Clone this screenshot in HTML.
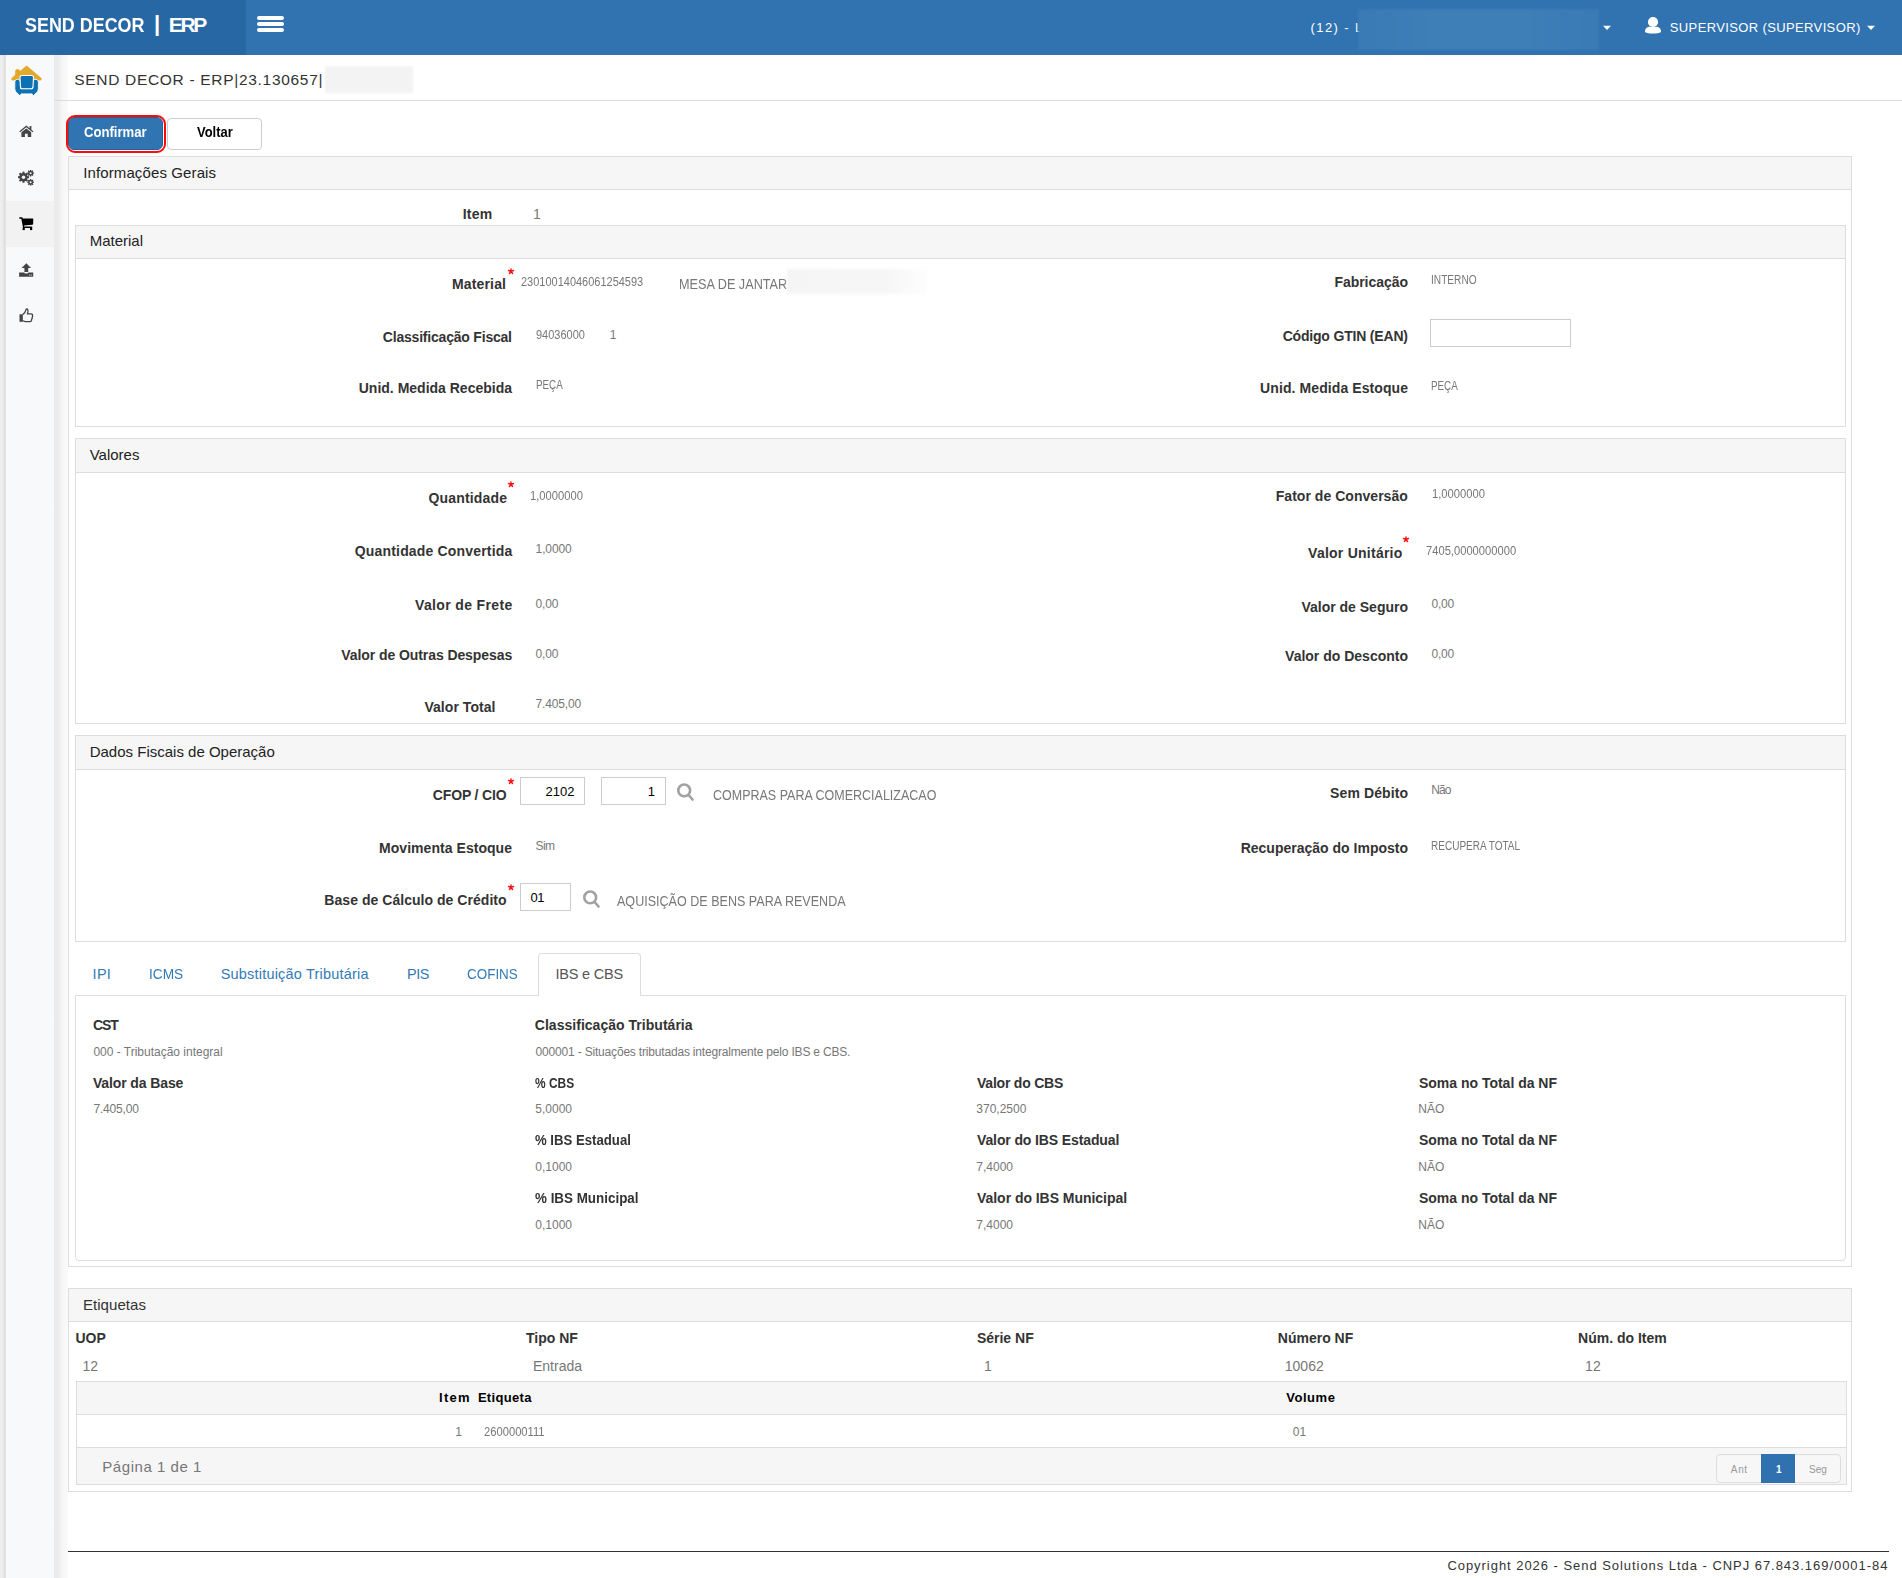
<!DOCTYPE html>
<html><head><meta charset="utf-8"><title>SEND DECOR | ERP</title>
<style>
html,body{margin:0;padding:0;}
body{width:1902px;height:1578px;position:relative;overflow:hidden;background:#fff;font-family:'Liberation Sans', sans-serif;}
.t{position:absolute;white-space:pre;}
.a{position:absolute;box-sizing:border-box;}
</style></head><body>
<!-- header -->
<div class=a style="left:0;top:0;width:1902px;height:55px;background:#3073b0;"></div>
<div class=a style="left:0;top:0;width:246px;height:55px;background:#2767a3;"></div>
<div class=a style="left:257px;top:15.6px;width:27px;height:4.2px;border-radius:2px;background:#fff;"></div>
<div class=a style="left:257px;top:22px;width:27px;height:4.2px;border-radius:2px;background:#fff;"></div>
<div class=a style="left:257px;top:28.2px;width:27px;height:4.2px;border-radius:2px;background:#fff;"></div>
<!-- blurred company -->
<div class=a style="left:1357.5px;top:9px;width:241.5px;height:41px;background:linear-gradient(to right,#3a7ab5 0%,#3e7fb8 30%,#3e7fb8 70%,#3a7ab5 100%);filter:blur(1px);z-index:2;"></div>
<svg class=a style="left:1603px;top:25px" width="9" height="6"><path d="M0 0.8 L8 0.8 L4 5 Z" fill="#fff"/></svg>
<!-- user icon -->
<svg class=a style="left:1644px;top:16px" width="18" height="19" viewBox="0 0 18 19"><circle cx="9" cy="6" r="5.1" fill="#fff"/><path d="M1 15.5 C1 12 4 10.8 5.5 10.8 L12.5 10.8 C14 10.8 17 12 17 15.5 C17 17 13 17.6 9 17.6 C5 17.6 1 17 1 15.5 Z" fill="#fff"/></svg>
<svg class=a style="left:1867px;top:25px" width="9" height="6"><path d="M0 0.8 L8 0.8 L4 5 Z" fill="#fff"/></svg>

<!-- sidebar -->
<div class=a style="left:0;top:55px;width:6px;height:1523px;background:linear-gradient(to right,#f0f0f0 0%,#ebebeb 45%,#dedede 80%,#e6e6e6 100%);"></div>
<div class=a style="left:6px;top:55px;width:48px;height:1523px;background:#f8f9fb;"></div>
<div class=a style="left:54px;top:55px;width:14px;height:1523px;background:linear-gradient(to right,#eaeaea 0%,#eeeeee 40%,#f6f6f6 55%,#fafafa 100%);"></div>
<div class=a style="left:6px;top:201px;width:48px;height:46px;background:#f2f2f2;"></div>
<!-- sidebar icons -->
<svg class=a style="left:0px;top:40px" width="54" height="60" viewBox="0 0 54 60">
  <path d="M26.6 25.6 L40.8 37.4 C42.3 38.6 41.9 40.6 40.2 40.6 L12.8 40.6 C11.1 40.6 10.7 38.6 12.2 37.4 L15.2 34.9 L15.2 31.2 C15.2 29.9 16.2 29.3 17.6 29.3 C19 29.3 20.2 29.9 20.2 30.9 Z" fill="#e3a92d"/>
  <path d="M17.4 39.4 C19 39.4 20.6 40.4 20.6 42.4 L20.6 48.6 L32.6 48.6 L32.6 42.4 C32.6 40.4 34.2 39.4 35.8 39.4 C37.4 39.4 38.4 40.4 38.4 42.4 L38.4 48.3 C38.4 50.8 37.3 52.4 35.5 53.5 L33.1 56.2 L32.1 53.9 L21.1 53.9 L20.1 56.2 L17.7 53.5 C15.9 52.4 14.8 50.8 14.8 48.3 L14.8 42.4 C14.8 40.4 15.8 39.4 17.4 39.4 Z" fill="#0c72b3" stroke="#fff" stroke-width="0.9"/>
  <path d="M22.2 35.5 L31.4 35.5 C32.8 35.5 33.5 36.2 33.5 37.4 L33 46.4 C33 47.8 32.2 48.7 30.8 48.7 L22.6 48.7 C21.2 48.7 20.4 47.8 20.4 46.4 L20 37.4 C20 36.2 20.8 35.5 22.2 35.5 Z" fill="#0c72b3" stroke="#fff" stroke-width="1.1"/>
</svg>
<!-- home -->
<svg class=a style="left:19px;top:125px" width="15" height="13" viewBox="0 0 15 13"><path d="M0.3 6.2 L7.3 0.6 L10.6 3.2 L10.6 1 L12.4 1 L12.4 4.7 L14.4 6.3 L13.6 7.2 L7.3 2.2 L1.1 7.2 Z" fill="#444"/><path d="M2.4 7.2 L7.3 3.4 L12.2 7.2 L12.2 12 L8.7 12 L8.7 8.8 L5.9 8.8 L5.9 12 L2.4 12 Z" fill="#444"/></svg>
<!-- gears -->
<svg class=a style="left:18px;top:170px" width="17" height="16" viewBox="0 0 17 16">
 <g fill="#444">
  <circle cx="5.5" cy="7.2" r="4.2"/>
  <g transform="translate(5.5 7.2)"><rect x="-1" y="-5.6" width="2" height="11.2"/><rect x="-5.6" y="-1" width="11.2" height="2"/><rect x="-1" y="-5.6" width="2" height="11.2" transform="rotate(45)"/><rect x="-1" y="-5.6" width="2" height="11.2" transform="rotate(-45)"/></g>
  <circle cx="12.6" cy="3.2" r="2.4"/>
  <g transform="translate(12.6 3.2)"><rect x="-0.7" y="-3.3" width="1.4" height="6.6"/><rect x="-3.3" y="-0.7" width="6.6" height="1.4"/><rect x="-0.7" y="-3.3" width="1.4" height="6.6" transform="rotate(45)"/><rect x="-0.7" y="-3.3" width="1.4" height="6.6" transform="rotate(-45)"/></g>
  <circle cx="12.6" cy="12.3" r="2.4"/>
  <g transform="translate(12.6 12.3)"><rect x="-0.7" y="-3.3" width="1.4" height="6.6"/><rect x="-3.3" y="-0.7" width="6.6" height="1.4"/><rect x="-0.7" y="-3.3" width="1.4" height="6.6" transform="rotate(45)"/><rect x="-0.7" y="-3.3" width="1.4" height="6.6" transform="rotate(-45)"/></g>
 </g>
 <circle cx="5.5" cy="7.2" r="1.7" fill="#f8f9fb"/><circle cx="12.6" cy="3.2" r="1" fill="#f8f9fb"/><circle cx="12.6" cy="12.3" r="1" fill="#f8f9fb"/>
</svg>
<!-- cart -->
<svg class=a style="left:19px;top:217px" width="15" height="14" viewBox="0 0 15 14"><path d="M0.3 0.3 L2.6 0.3 C3.2 0.3 3.6 0.8 3.7 1.3 L3.8 1.6 L14.2 1.6 L14.2 6.8 C14.2 7.3 13.8 7.7 13.3 7.8 L5 8.6 L5.2 9.6 L13.2 9.6 L13.2 11 L4.1 11 L2.3 1.8 L0.3 1.8 Z" fill="#000"/><rect x="3.6" y="10.5" width="2.2" height="2.6" fill="#000"/><rect x="11" y="10.5" width="2.2" height="2.6" fill="#000"/></svg>
<!-- upload -->
<svg class=a style="left:19px;top:263px" width="15" height="15" viewBox="0 0 15 15"><path d="M7.3 0.3 L12 5 L9.2 5 L9.2 9 L5.4 9 L5.4 5 L2.6 5 Z" fill="#444"/><path d="M0.1 9.5 L5.2 9.5 C5.5 10.3 6.3 10.6 7.3 10.6 C8.3 10.6 9.1 10.3 9.4 9.5 L14.2 9.5 L14.2 13.8 L0.1 13.8 Z" fill="#444"/><circle cx="10.6" cy="12" r="0.6" fill="#f8f9fb"/><circle cx="12.3" cy="12" r="0.6" fill="#f8f9fb"/></svg>
<!-- thumbs up -->
<svg class=a style="left:19px;top:308px" width="15" height="16" viewBox="0 0 15 16"><path d="M0.5 6.3 L3.8 6.3 L3.8 13.8 L0.5 13.8 Z" fill="#444"/><path d="M3.6 6.8 C5.6 5.2 6.6 3.5 7 1.6 C7.2 0.8 8.2 0.8 8.7 1.5 C9.2 2.4 9.1 4 8.5 5.8 L12.2 5.8 C13.3 5.8 13.8 6.8 13.4 7.6 C13.8 8.3 13.6 9.1 13.1 9.5 C13.4 10.2 13.2 11 12.6 11.4 C12.8 12.3 12.4 13.3 11.3 13.6 L6.6 13.6 C5.3 13.6 4.4 13 3.6 12.6" fill="none" stroke="#444" stroke-width="1.3" stroke-linejoin="round"/></svg>

<!-- title blur + underline -->
<div class=a style="left:325px;top:66px;width:88px;height:27px;background:#f3f3f3;filter:blur(1.2px);z-index:2;"></div>
<div class=a style="left:54px;top:100px;width:1848px;height:1px;background:#dcdcdc;"></div>

<!-- buttons -->
<div class=a style="left:67.6px;top:117.4px;width:95.6px;height:32.2px;background:#3174b2;border:1px solid #285f95;border-radius:6px;"></div>
<div class=a style="left:65.5px;top:115.3px;width:100px;height:38px;border:2.4px solid #ff0a0a;border-radius:9px;"></div>
<div class=a style="left:167px;top:118px;width:95px;height:32px;background:#fff;border:1px solid #ccc;border-radius:4px;"></div>

<!-- outer panel Informações Gerais -->
<div class=a style="left:68px;top:156px;width:1784px;height:1111px;border:1px solid #ddd;"></div>
<div class=a style="left:69px;top:157px;width:1782px;height:33px;background:#f6f6f6;border-bottom:1px solid #ddd;"></div>
<!-- Material -->
<div class=a style="left:75px;top:225px;width:1771px;height:202px;border:1px solid #ddd;"></div>
<div class=a style="left:76px;top:226px;width:1769px;height:33px;background:#f6f6f6;border-bottom:1px solid #ddd;"></div>
<!-- Valores -->
<div class=a style="left:75px;top:438px;width:1771px;height:286px;border:1px solid #ddd;"></div>
<div class=a style="left:76px;top:439px;width:1769px;height:34px;background:#f6f6f6;border-bottom:1px solid #ddd;"></div>
<!-- Dados Fiscais -->
<div class=a style="left:75px;top:735px;width:1771px;height:207px;border:1px solid #ddd;"></div>
<div class=a style="left:76px;top:736px;width:1769px;height:34px;background:#f6f6f6;border-bottom:1px solid #ddd;"></div>

<!-- asterisks -->
<svg class=a style="left:507.0px;top:267.5px" width="8" height="8" viewBox="0 0 8 8"><path d="M4 3.3 L4 0.9 M4 3.3 L6.5 2.5 M4 3.3 L5.5 5.5 M4 3.3 L2.5 5.5 M4 3.3 L1.5 2.5" stroke="#fa1010" stroke-width="1.45" stroke-linecap="round"/></svg>
<svg class=a style="left:507.0px;top:480.5px" width="8" height="8" viewBox="0 0 8 8"><path d="M4 3.3 L4 0.9 M4 3.3 L6.5 2.5 M4 3.3 L5.5 5.5 M4 3.3 L2.5 5.5 M4 3.3 L1.5 2.5" stroke="#fa1010" stroke-width="1.45" stroke-linecap="round"/></svg>
<svg class=a style="left:1402.0px;top:535.5px" width="8" height="8" viewBox="0 0 8 8"><path d="M4 3.3 L4 0.9 M4 3.3 L6.5 2.5 M4 3.3 L5.5 5.5 M4 3.3 L2.5 5.5 M4 3.3 L1.5 2.5" stroke="#fa1010" stroke-width="1.45" stroke-linecap="round"/></svg>
<svg class=a style="left:507.0px;top:777.5px" width="8" height="8" viewBox="0 0 8 8"><path d="M4 3.3 L4 0.9 M4 3.3 L6.5 2.5 M4 3.3 L5.5 5.5 M4 3.3 L2.5 5.5 M4 3.3 L1.5 2.5" stroke="#fa1010" stroke-width="1.45" stroke-linecap="round"/></svg>
<svg class=a style="left:507.0px;top:883.5px" width="8" height="8" viewBox="0 0 8 8"><path d="M4 3.3 L4 0.9 M4 3.3 L6.5 2.5 M4 3.3 L5.5 5.5 M4 3.3 L2.5 5.5 M4 3.3 L1.5 2.5" stroke="#fa1010" stroke-width="1.45" stroke-linecap="round"/></svg>

<!-- MESA blur -->
<div class=a style="left:787px;top:269px;width:140px;height:25px;background:linear-gradient(to right,#f5f5f5 0%,#f6f6f6 70%,#fdfdfd 100%);filter:blur(1.5px);z-index:2;"></div>

<!-- inputs -->
<div class=a style="left:1430px;top:319px;width:141px;height:28px;border:1px solid #ccc;background:#fff;"></div>
<div class=a style="left:520px;top:777px;width:65px;height:28px;border:1px solid #ccc;background:#fff;"></div>
<div class=a style="left:601px;top:777px;width:65px;height:28px;border:1px solid #ccc;background:#fff;"></div>
<div class=a style="left:520px;top:883px;width:51px;height:28px;border:1px solid #ccc;background:#fff;"></div>
<!-- search icons -->
<svg class=a style="left:676px;top:782px" width="19" height="20" viewBox="0 0 19 20"><circle cx="8.2" cy="8.4" r="5.9" fill="none" stroke="#a3a0a4" stroke-width="2.6"/><path d="M12.6 13 L16.5 17.5" stroke="#a3a0a4" stroke-width="2.6" stroke-linecap="round"/></svg>
<svg class=a style="left:581.5px;top:889px" width="19" height="20" viewBox="0 0 19 20"><circle cx="8.2" cy="8.4" r="5.9" fill="none" stroke="#a3a0a4" stroke-width="2.6"/><path d="M12.6 13 L16.5 17.5" stroke="#a3a0a4" stroke-width="2.6" stroke-linecap="round"/></svg>

<!-- tabs -->
<div class=a style="left:75px;top:995px;width:1771px;height:266px;border:1px solid #ddd;border-radius:0 0 4px 4px;"></div>
<div class=a style="left:538px;top:953px;width:103px;height:43px;background:#fff;border:1px solid #ddd;border-bottom:none;border-radius:4px 4px 0 0;"></div>

<!-- Etiquetas panel -->
<div class=a style="left:68px;top:1288px;width:1784px;height:204px;border:1px solid #ddd;"></div>
<div class=a style="left:69px;top:1289px;width:1782px;height:33px;background:#f6f6f6;border-bottom:1px solid #ddd;"></div>
<div class=a style="left:76px;top:1381px;width:1771px;height:104px;border:1px solid #ddd;"></div>
<div class=a style="left:77px;top:1382px;width:1769px;height:33px;background:#f6f6f6;border-bottom:1px solid #ddd;"></div>
<div class=a style="left:77px;top:1447px;width:1769px;height:37px;background:#f6f6f6;border-top:1px solid #ddd;"></div>
<!-- pagination -->
<div class=a style="left:1716px;top:1454px;width:125px;height:29px;background:#f7f7f7;border:1px solid #ddd;border-radius:4px;"></div>
<div class=a style="left:1761px;top:1454px;width:34px;height:29px;background:#3072b0;"></div>
<!-- footer -->
<div class=a style="left:68px;top:1551px;width:1821px;height:1px;background:#333;"></div>

<div class=t style="top:13.72px;font-size:21px;line-height:21px;font-weight:bold;color:#fff;transform:scaleX(0.8534);transform-origin:left center;left:24.80px;">SEND DECOR</div><div class=t style="top:12.68px;font-size:22px;line-height:22px;font-weight:bold;color:#fff;left:154.00px;">|</div><div class=t style="top:13.72px;font-size:21px;line-height:21px;font-weight:bold;color:#fff;letter-spacing:-2.329px;left:168.80px;">ERP</div><div class=t style="top:21.00px;font-size:13px;line-height:13px;font-weight:normal;color:#fff;letter-spacing:1.387px;left:1310.60px;">(12) - L</div><div class=t style="top:20.90px;font-size:13px;line-height:13px;font-weight:normal;color:#fff;letter-spacing:0.37px;left:1669.80px;">SUPERVISOR (SUPERVISOR)</div><div class=t style="top:72.48px;font-size:15.5px;line-height:15.5px;font-weight:normal;color:#333;letter-spacing:0.692px;left:74.20px;">SEND DECOR - ERP|23.130657|</div><div class=t style="top:124.75px;font-size:14px;line-height:14px;font-weight:bold;color:#fff;transform:scaleX(0.9371);transform-origin:left center;left:84.00px;">Confirmar</div><div class=t style="top:124.75px;font-size:14px;line-height:14px;font-weight:bold;color:#000;transform:scaleX(0.9239);transform-origin:left center;left:196.80px;">Voltar</div><div class=t style="top:165.30px;font-size:15px;line-height:15px;font-weight:normal;color:#222;letter-spacing:0.117px;left:83.20px;">Informações Gerais</div><div class=t style="top:233.30px;font-size:15px;line-height:15px;font-weight:normal;color:#222;left:89.70px;">Material</div><div class=t style="top:447.30px;font-size:15px;line-height:15px;font-weight:normal;color:#222;left:89.70px;">Valores</div><div class=t style="top:744.30px;font-size:15px;line-height:15px;font-weight:normal;color:#222;left:89.70px;">Dados Fiscais de Operação</div><div class=t style="top:1297.00px;font-size:15px;line-height:15px;font-weight:normal;color:#333;letter-spacing:0.061px;left:82.90px;">Etiquetas</div><div class=t style="top:207.15px;font-size:14px;line-height:14px;font-weight:bold;color:#333;letter-spacing:0.226px;right:1409.57px;">Item</div><div class=t style="top:207.15px;font-size:14px;line-height:14px;font-weight:normal;color:#777;left:533.00px;">1</div><div class=t style="top:277.05px;font-size:14px;line-height:14px;font-weight:bold;color:#333;letter-spacing:0.172px;right:1395.83px;">Material</div><div class=t style="top:275.84px;font-size:12px;line-height:12px;font-weight:normal;color:#777;transform:scaleX(0.9155);transform-origin:left center;left:521.40px;">23010014046061254593</div><div class=t style="top:277.15px;font-size:14px;line-height:14px;font-weight:normal;color:#777;transform:scaleX(0.9051);transform-origin:left center;left:679.00px;">MESA DE JANTAR</div><div class=t style="top:329.85px;font-size:14px;line-height:14px;font-weight:bold;color:#333;letter-spacing:-0.204px;right:1390.20px;">Classificação Fiscal</div><div class=t style="top:329.34px;font-size:12px;line-height:12px;font-weight:normal;color:#777;transform:scaleX(0.9159);transform-origin:left center;left:535.60px;">94036000</div><div class=t style="top:329.34px;font-size:12px;line-height:12px;font-weight:normal;color:#777;left:609.70px;">1</div><div class=t style="top:380.65px;font-size:14px;line-height:14px;font-weight:bold;color:#333;right:1390.00px;">Unid. Medida Recebida</div><div class=t style="top:379.44px;font-size:12px;line-height:12px;font-weight:normal;color:#777;transform:scaleX(0.8199);transform-origin:left center;left:535.60px;">PEÇA</div><div class=t style="top:275.35px;font-size:14px;line-height:14px;font-weight:bold;color:#333;letter-spacing:-0.034px;right:494.03px;">Fabricação</div><div class=t style="top:273.74px;font-size:12px;line-height:12px;font-weight:normal;color:#777;transform:scaleX(0.8444);transform-origin:left center;left:1431.30px;">INTERNO</div><div class=t style="top:329.15px;font-size:14px;line-height:14px;font-weight:bold;color:#333;letter-spacing:-0.183px;right:494.18px;">Código GTIN (EAN)</div><div class=t style="top:380.65px;font-size:14px;line-height:14px;font-weight:bold;color:#333;letter-spacing:0.088px;right:493.91px;">Unid. Medida Estoque</div><div class=t style="top:379.54px;font-size:12px;line-height:12px;font-weight:normal;color:#777;transform:scaleX(0.8199);transform-origin:left center;left:1431.30px;">PEÇA</div><div class=t style="top:490.65px;font-size:14px;line-height:14px;font-weight:bold;color:#333;letter-spacing:0.188px;right:1394.71px;">Quantidade</div><div class=t style="top:489.64px;font-size:12px;line-height:12px;font-weight:normal;color:#777;transform:scaleX(0.9342);transform-origin:left center;left:530.40px;">1,0000000</div><div class=t style="top:543.65px;font-size:14px;line-height:14px;font-weight:bold;color:#333;letter-spacing:0.17px;right:1389.63px;">Quantidade Convertida</div><div class=t style="top:542.54px;font-size:12px;line-height:12px;font-weight:normal;color:#777;letter-spacing:-0.117px;left:535.60px;">1,0000</div><div class=t style="top:598.35px;font-size:14px;line-height:14px;font-weight:bold;color:#333;letter-spacing:0.35px;right:1389.45px;">Valor de Frete</div><div class=t style="top:597.64px;font-size:12px;line-height:12px;font-weight:normal;color:#777;letter-spacing:-0.215px;left:535.60px;">0,00</div><div class=t style="top:648.15px;font-size:14px;line-height:14px;font-weight:bold;color:#333;letter-spacing:-0.082px;right:1389.88px;">Valor de Outras Despesas</div><div class=t style="top:647.54px;font-size:12px;line-height:12px;font-weight:normal;color:#777;letter-spacing:-0.215px;left:535.60px;">0,00</div><div class=t style="top:699.75px;font-size:14px;line-height:14px;font-weight:bold;color:#333;letter-spacing:0.059px;right:1406.44px;">Valor Total</div><div class=t style="top:698.24px;font-size:12px;line-height:12px;font-weight:normal;color:#777;letter-spacing:-0.165px;left:535.60px;">7.405,00</div><div class=t style="top:489.05px;font-size:14px;line-height:14px;font-weight:bold;color:#333;letter-spacing:0.034px;right:494.17px;">Fator de Conversão</div><div class=t style="top:488.14px;font-size:12px;line-height:12px;font-weight:normal;color:#777;transform:scaleX(0.9342);transform-origin:left center;left:1431.50px;">1,0000000</div><div class=t style="top:545.55px;font-size:14px;line-height:14px;font-weight:bold;color:#333;letter-spacing:0.248px;right:499.45px;">Valor Unitário</div><div class=t style="top:545.34px;font-size:12px;line-height:12px;font-weight:normal;color:#777;transform:scaleX(0.9310);transform-origin:left center;left:1425.90px;">7405,0000000000</div><div class=t style="top:599.75px;font-size:14px;line-height:14px;font-weight:bold;color:#333;right:494.00px;">Valor de Seguro</div><div class=t style="top:598.14px;font-size:12px;line-height:12px;font-weight:normal;color:#777;letter-spacing:-0.215px;left:1431.50px;">0,00</div><div class=t style="top:649.25px;font-size:14px;line-height:14px;font-weight:bold;color:#333;right:494.00px;">Valor do Desconto</div><div class=t style="top:647.94px;font-size:12px;line-height:12px;font-weight:normal;color:#777;letter-spacing:-0.215px;left:1431.50px;">0,00</div><div class=t style="top:787.65px;font-size:14px;line-height:14px;font-weight:bold;color:#333;letter-spacing:-0.16px;right:1395.56px;">CFOP / CIO</div><div class=t style="top:785.20px;font-size:13px;line-height:13px;font-weight:normal;color:#000;letter-spacing:0.045px;right:1327.36px;">2102</div><div class=t style="top:785.20px;font-size:13px;line-height:13px;font-weight:normal;color:#000;right:1247.00px;">1</div><div class=t style="top:787.85px;font-size:14px;line-height:14px;font-weight:normal;color:#777;transform:scaleX(0.8928);transform-origin:left center;left:712.60px;">COMPRAS PARA COMERCIALIZACAO</div><div class=t style="top:840.65px;font-size:14px;line-height:14px;font-weight:bold;color:#333;letter-spacing:0.044px;right:1389.96px;">Movimenta Estoque</div><div class=t style="top:839.84px;font-size:12px;line-height:12px;font-weight:normal;color:#777;letter-spacing:-0.591px;left:535.50px;">Sim</div><div class=t style="top:893.25px;font-size:14px;line-height:14px;font-weight:bold;color:#333;letter-spacing:0.039px;right:1395.36px;">Base de Cálculo de Crédito</div><div class=t style="top:891.00px;font-size:13px;line-height:13px;font-weight:normal;color:#000;letter-spacing:-0.484px;left:530.40px;">01</div><div class=t style="top:894.05px;font-size:14px;line-height:14px;font-weight:normal;color:#777;transform:scaleX(0.8967);transform-origin:left center;left:617.40px;">AQUISIÇÃO DE BENS PARA REVENDA</div><div class=t style="top:786.45px;font-size:14px;line-height:14px;font-weight:bold;color:#333;letter-spacing:0.098px;right:493.90px;">Sem Débito</div><div class=t style="top:784.44px;font-size:12px;line-height:12px;font-weight:normal;color:#777;letter-spacing:-0.905px;left:1431.30px;">Não</div><div class=t style="top:841.05px;font-size:14px;line-height:14px;font-weight:bold;color:#333;letter-spacing:0.006px;right:493.99px;">Recuperação do Imposto</div><div class=t style="top:839.84px;font-size:12px;line-height:12px;font-weight:normal;color:#777;transform:scaleX(0.8350);transform-origin:left center;left:1431.30px;">RECUPERA TOTAL</div><div class=t style="top:967.03px;font-size:14.5px;line-height:14.5px;font-weight:normal;color:#337ab7;letter-spacing:0.289px;left:92.60px;">IPI</div><div class=t style="top:967.03px;font-size:14.5px;line-height:14.5px;font-weight:normal;color:#337ab7;transform:scaleX(0.9434);transform-origin:left center;left:148.70px;">ICMS</div><div class=t style="top:967.03px;font-size:14.5px;line-height:14.5px;font-weight:normal;color:#337ab7;letter-spacing:0.197px;left:220.70px;">Substituição Tributária</div><div class=t style="top:967.03px;font-size:14.5px;line-height:14.5px;font-weight:normal;color:#337ab7;letter-spacing:-0.492px;left:407.10px;">PIS</div><div class=t style="top:967.03px;font-size:14.5px;line-height:14.5px;font-weight:normal;color:#337ab7;transform:scaleX(0.9273);transform-origin:left center;left:466.80px;">COFINS</div><div class=t style="top:967.03px;font-size:14.5px;line-height:14.5px;font-weight:normal;color:#555;letter-spacing:-0.201px;left:555.40px;">IBS e CBS</div><div class=t style="top:1017.95px;font-size:14px;line-height:14px;font-weight:bold;color:#333;letter-spacing:-1.0px;left:92.90px;">CST</div><div class=t style="top:1045.84px;font-size:12px;line-height:12px;font-weight:normal;color:#777;letter-spacing:-0.005px;left:93.40px;">000 - Tributação integral</div><div class=t style="top:1018.05px;font-size:14px;line-height:14px;font-weight:bold;color:#333;letter-spacing:0.026px;left:534.80px;">Classificação Tributária</div><div class=t style="top:1045.84px;font-size:12px;line-height:12px;font-weight:normal;color:#777;letter-spacing:-0.184px;left:535.60px;">000001 - Situações tributadas integralmente pelo IBS e CBS.</div><div class=t style="top:1075.75px;font-size:14px;line-height:14px;font-weight:bold;color:#333;letter-spacing:-0.11px;left:92.90px;">Valor da Base</div><div class=t style="top:1103.04px;font-size:12px;line-height:12px;font-weight:normal;color:#777;letter-spacing:-0.177px;left:93.40px;">7.405,00</div><div class=t style="top:1075.75px;font-size:14px;line-height:14px;font-weight:bold;color:#333;transform:scaleX(0.8539);transform-origin:left center;left:534.80px;">% CBS</div><div class=t style="top:1103.04px;font-size:12px;line-height:12px;font-weight:normal;color:#777;left:535.30px;">5,0000</div><div class=t style="top:1075.75px;font-size:14px;line-height:14px;font-weight:bold;color:#333;letter-spacing:-0.216px;left:977.00px;">Valor do CBS</div><div class=t style="top:1103.04px;font-size:12px;line-height:12px;font-weight:normal;color:#777;left:976.30px;">370,2500</div><div class=t style="top:1075.75px;font-size:14px;line-height:14px;font-weight:bold;color:#333;letter-spacing:-0.011px;left:1419.00px;">Soma no Total da NF</div><div class=t style="top:1103.04px;font-size:12px;line-height:12px;font-weight:normal;color:#777;left:1418.30px;">NÃO</div><div class=t style="top:1133.45px;font-size:14px;line-height:14px;font-weight:bold;color:#333;transform:scaleX(0.9409);transform-origin:left center;left:534.80px;">% IBS Estadual</div><div class=t style="top:1160.74px;font-size:12px;line-height:12px;font-weight:normal;color:#777;left:535.30px;">0,1000</div><div class=t style="top:1133.45px;font-size:14px;line-height:14px;font-weight:bold;color:#333;letter-spacing:-0.119px;left:977.00px;">Valor do IBS Estadual</div><div class=t style="top:1160.74px;font-size:12px;line-height:12px;font-weight:normal;color:#777;left:976.30px;">7,4000</div><div class=t style="top:1133.45px;font-size:14px;line-height:14px;font-weight:bold;color:#333;letter-spacing:-0.011px;left:1419.00px;">Soma no Total da NF</div><div class=t style="top:1160.74px;font-size:12px;line-height:12px;font-weight:normal;color:#777;left:1418.30px;">NÃO</div><div class=t style="top:1191.25px;font-size:14px;line-height:14px;font-weight:bold;color:#333;transform:scaleX(0.9572);transform-origin:left center;left:534.80px;">% IBS Municipal</div><div class=t style="top:1218.84px;font-size:12px;line-height:12px;font-weight:normal;color:#777;left:535.30px;">0,1000</div><div class=t style="top:1191.25px;font-size:14px;line-height:14px;font-weight:bold;color:#333;letter-spacing:-0.042px;left:977.00px;">Valor do IBS Municipal</div><div class=t style="top:1218.84px;font-size:12px;line-height:12px;font-weight:normal;color:#777;left:976.30px;">7,4000</div><div class=t style="top:1191.25px;font-size:14px;line-height:14px;font-weight:bold;color:#333;letter-spacing:-0.011px;left:1419.00px;">Soma no Total da NF</div><div class=t style="top:1218.84px;font-size:12px;line-height:12px;font-weight:normal;color:#777;left:1418.30px;">NÃO</div><div class=t style="top:1330.95px;font-size:14px;line-height:14px;font-weight:bold;color:#333;left:75.50px;">UOP</div><div class=t style="top:1358.75px;font-size:14px;line-height:14px;font-weight:normal;color:#777;left:82.50px;">12</div><div class=t style="top:1330.95px;font-size:14px;line-height:14px;font-weight:bold;color:#333;left:526.00px;">Tipo NF</div><div class=t style="top:1358.75px;font-size:14px;line-height:14px;font-weight:normal;color:#777;left:533.00px;">Entrada</div><div class=t style="top:1330.95px;font-size:14px;line-height:14px;font-weight:bold;color:#333;left:976.90px;">Série NF</div><div class=t style="top:1358.75px;font-size:14px;line-height:14px;font-weight:normal;color:#777;left:983.90px;">1</div><div class=t style="top:1330.95px;font-size:14px;line-height:14px;font-weight:bold;color:#333;left:1277.80px;">Número NF</div><div class=t style="top:1358.75px;font-size:14px;line-height:14px;font-weight:normal;color:#777;left:1284.80px;">10062</div><div class=t style="top:1330.95px;font-size:14px;line-height:14px;font-weight:bold;color:#333;left:1578.10px;">Núm. do Item</div><div class=t style="top:1358.75px;font-size:14px;line-height:14px;font-weight:normal;color:#777;left:1585.10px;">12</div><div class=t style="top:1391.40px;font-size:13px;line-height:13px;font-weight:bold;color:#000;letter-spacing:1.241px;right:1431.26px;">Item</div><div class=t style="top:1391.40px;font-size:13px;line-height:13px;font-weight:bold;color:#000;letter-spacing:0.313px;left:477.90px;">Etiqueta</div><div class=t style="top:1391.40px;font-size:13px;line-height:13px;font-weight:bold;color:#000;letter-spacing:0.517px;left:1286.30px;">Volume</div><div class=t style="top:1425.84px;font-size:12px;line-height:12px;font-weight:normal;color:#777;right:1440.00px;">1</div><div class=t style="top:1425.84px;font-size:12px;line-height:12px;font-weight:normal;color:#777;transform:scaleX(0.9328);transform-origin:left center;left:483.90px;">2600000111</div><div class=t style="top:1425.84px;font-size:12px;line-height:12px;font-weight:normal;color:#777;left:1292.80px;">01</div><div class=t style="top:1458.90px;font-size:15px;line-height:15px;font-weight:normal;color:#777;letter-spacing:0.548px;left:102.30px;">Página 1 de 1</div><div class=t style="top:1464.74px;font-size:10px;line-height:10px;font-weight:normal;color:#999;letter-spacing:0.661px;left:1730.80px;">Ant</div><div class=t style="top:1464.74px;font-size:10px;line-height:10px;font-weight:bold;color:#fff;left:1775.90px;">1</div><div class=t style="top:1464.74px;font-size:10px;line-height:10px;font-weight:normal;color:#999;letter-spacing:0.068px;left:1808.90px;">Seg</div><div class=t style="top:1559.00px;font-size:13px;line-height:13px;font-weight:normal;color:#333;letter-spacing:0.958px;right:13.64px;">Copyright 2026 - Send Solutions Ltda - CNPJ 67.843.169/0001-84</div>
</body></html>
